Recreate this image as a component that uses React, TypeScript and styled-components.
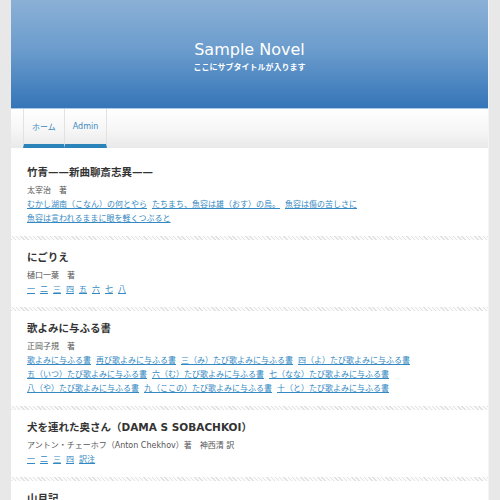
import styled, { createGlobalStyle } from "styled-components";

const GlobalStyle = createGlobalStyle`
  html, body {
    margin: 0;
    padding: 0;
    background: #e8e8e8;
    font-family: "DejaVu Sans", "Noto Sans CJK JP", sans-serif;
  }
`;

const Page = styled.div`
  padding: 0 11px;
`;

const Container = styled.div`
  background: #fff;
  border-right: 1px solid #f4f4f4;
`;

const Header = styled.header`
  height: 108px;
  background: linear-gradient(to bottom, #8bb0d6 0%, #6c9dcd 45%, #3575b8 100%);
  display: flex;
  flex-direction: column;
  align-items: center;
  justify-content: center;
  color: #fff;
  padding-top: 6px;
  box-sizing: border-box;
`;

const SiteTitle = styled.h1`
  margin: 0;
  font-size: 16px;
  font-weight: normal;
  line-height: 22px;
`;

const Subtitle = styled.p`
  margin: 0;
  font-size: 8px;
  line-height: 14px;
  font-weight: bold;
`;

const Nav = styled.nav`
  height: 40px;
  border-top: 1px solid #a9c8e6;
  box-sizing: border-box;
  background: linear-gradient(to bottom, #ffffff 0%, #f6f6f6 55%, #e9e9e9 100%);
  display: flex;
  padding-left: 12px;
`;

const Tab = styled.a<{ $last?: boolean }>`
  display: flex;
  align-items: center;
  padding: 0 8px;
  font-size: 8px;
  color: #3d88be;
  border-left: 1px solid #e2e2e2;
  border-right: ${(p) => (p.$last ? "1px solid #e2e2e2" : "none")};
  border-bottom: 4px solid #2a84b9;
  text-decoration: none;
`;

const Content = styled.main`
  padding-top: 7px;
`;

const Article = styled.section`
  padding: 8px 16px 10px;
`;

const Divider = styled.div`
  height: 4px;
  background: repeating-linear-gradient(
    45deg,
    #e2e2e2 0px,
    #e2e2e2 1px,
    #fbfbfb 1px,
    #fbfbfb 3px
  );
`;

const Title = styled.h2`
  margin: 0;
  font-size: 10.5px;
  line-height: 18px;
  color: #333;
`;

const Author = styled.p`
  margin: 2.5px 0 0;
  font-size: 8px;
  line-height: 14px;
  color: #555;
`;

const Links = styled.div`
  display: flex;
  flex-wrap: wrap;
  column-gap: 5px;
  font-size: 8px;
  line-height: 14px;
  margin-top: 0.5px;
`;

const Chapter = styled.a`
  color: #3489c3;
  text-decoration: underline;
`;

const novels = [
  {
    title: "竹青——新曲聊斎志異——",
    author: "太宰治　著",
    chapters: [
      "むかし湖南（こなん）の何とやら",
      "たちまち、魚容は雄（おす）の烏。",
      "魚容は傷の苦しさに",
      "魚容は言われるままに眼を軽くつぶると",
    ],
  },
  {
    title: "にごりえ",
    author: "樋口一葉　著",
    chapters: ["一", "二", "三", "四", "五", "六", "七", "八"],
  },
  {
    title: "歌よみに与ふる書",
    author: "正岡子規　著",
    chapters: [
      "歌よみに与ふる書",
      "再び歌よみに与ふる書",
      "三（み）たび歌よみに与ふる書",
      "四（よ）たび歌よみに与ふる書",
      "五（いつ）たび歌よみに与ふる書",
      "六（む）たび歌よみに与ふる書",
      "七（なな）たび歌よみに与ふる書",
      "八（や）たび歌よみに与ふる書",
      "九（ここの）たび歌よみに与ふる書",
      "十（と）たび歌よみに与ふる書",
    ],
  },
  {
    title: "犬を連れた奥さん（DAMA S SOBACHKOI）",
    author: "アントン・チェーホフ（Anton Chekhov）著　神西清 訳",
    chapters: ["一", "二", "三", "四", "訳注"],
  },
  {
    title: "山月記",
    author: "中島敦　著",
    chapters: ["一"],
  },
];

export default function App() {
  return (
    <Page>
      <GlobalStyle />
      <Container>
        <Header>
          <SiteTitle>Sample Novel</SiteTitle>
          <Subtitle>ここにサブタイトルが入ります</Subtitle>
        </Header>
        <Nav>
          <Tab href="#">ホーム</Tab>
          <Tab href="#" $last>
            Admin
          </Tab>
        </Nav>
        <Content>
          {novels.map((n, i) => (
            <div key={n.title}>
              {i > 0 && <Divider />}
              <Article>
                <Title>{n.title}</Title>
                <Author>{n.author}</Author>
                <Links>
                  {n.chapters.map((c) => (
                    <Chapter href="#" key={c}>
                      {c}
                    </Chapter>
                  ))}
                </Links>
              </Article>
            </div>
          ))}
        </Content>
      </Container>
    </Page>
  );
}
